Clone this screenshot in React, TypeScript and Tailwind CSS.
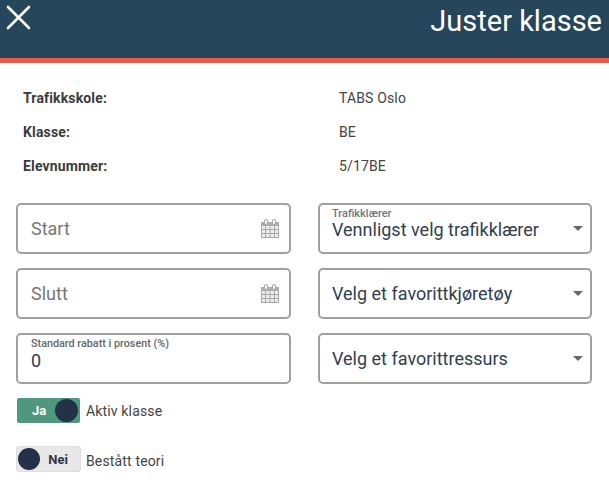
import React from "react";

function CalendarIcon() {
  return (
    <svg width="20" height="20" viewBox="0 0 20 20" className="shrink-0">
      <rect x="1.5" y="3.5" width="17" height="15" fill="#ececec" stroke="#a8a8a8" />
      <rect x="1" y="3" width="18" height="4" fill="#adadad" />
      <rect x="4.5" y="0.5" width="3" height="5" rx="1.5" fill="#fff" stroke="#a3a3a3" />
      <rect x="12.5" y="0.5" width="3" height="5" rx="1.5" fill="#fff" stroke="#a3a3a3" />
      <path d="M1 10.5h18M1 14.5h18M5.5 7v11M10 7v11M14.5 7v11" stroke="#a8a8a8" strokeWidth="1" fill="none" />
    </svg>
  );
}

function Caret() {
  return <div className="absolute right-[7px] top-[21px] w-0 h-0 border-x-[5px] border-x-transparent border-t-[5px] border-t-[#666]" />;
}

function Info({ label, value }: { label: string; value: string }) {
  return (
    <div className="flex h-[34px] items-center tracking-[0.15px]">
      <div className="w-[316px] font-bold text-[14px] text-[#3b3b3b]">{label}</div>
      <div className="text-[14px] text-[#444]">{value}</div>
    </div>
  );
}

function Field({ children, className = "" }: { children: React.ReactNode; className?: string }) {
  return (
    <div className={`relative h-[51px] rounded-[5px] border-[2px] border-[#a0a0a0] bg-white ${className}`}>
      {children}
    </div>
  );
}

function DateField({ label }: { label: string }) {
  return (
    <Field className="flex items-center justify-between pl-[13px] pr-[9px]">
      <span className="text-[18px] text-[#777]">{label}</span>
      <CalendarIcon />
    </Field>
  );
}

function SelectField({ label }: { label: string }) {
  return (
    <Field className="flex items-center pl-[12px]">
      <span className="text-[18px] text-[#30404f]">{label}</span>
      <Caret />
    </Field>
  );
}

export default function App() {
  return (
    <div className="w-[609px] h-[480px] overflow-hidden bg-white font-['Roboto',sans-serif]">
      <header className="flex h-[58px] items-start justify-between bg-[#26465c] pl-[6px] pr-[7px]">
        <svg width="25" height="25" viewBox="0 0 25 25" className="mt-[5px]">
          <path d="M2 2L23 23M23 2L2 23" stroke="#fff" strokeWidth="2.6" strokeLinecap="round" />
        </svg>
        <h1 className="mt-[3px] text-[29px] leading-[36px] font-normal text-white">Juster klasse</h1>
      </header>
      <div className="h-[5px] bg-[#eb5a48]" />

      <section className="mt-[18px] pl-[23px]">
        <Info label="Trafikkskole:" value="TABS Oslo" />
        <Info label="Klasse:" value="BE" />
        <Info label="Elevnummer:" value="5/17BE" />
      </section>

      <section className="mt-[20px] ml-[16px] grid w-[576px] grid-cols-[275px_274px] gap-x-[27px] gap-y-[14px]">
        <DateField label="Start" />
        <Field className="pl-[12px] pt-[3px]">
          <div className="text-[11px] leading-[11px] font-medium text-[#777]">Trafikklærer</div>
          <div className="text-[18px] leading-[22px] text-[#30404f]">Vennligst velg trafikklærer</div>
          <Caret />
        </Field>
        <DateField label="Slutt" />
        <SelectField label="Velg et favorittkjøretøy" />
        <Field className="pl-[13px] pt-[3px]">
          <div className="text-[10.8px] leading-[11px] font-medium text-[#666]">Standard rabatt i prosent (%)</div>
          <div className="text-[18px] leading-[24px] text-[#30404f]">0</div>
        </Field>
        <SelectField label="Velg et favorittressurs" />
      </section>

      <section className="mt-[14px] ml-[17px]">
        <div className="flex h-[26px] items-start">
          <div className="flex h-[25px] w-[63px] items-center justify-between rounded-[2px] bg-[#4f977d] pl-[15px] pr-[2px]">
            <span className="pt-[1px] text-[13px] font-bold text-white">Ja</span>
            <span className="h-[23px] w-[23px] rounded-full bg-[#233246]" />
          </div>
          <span className="ml-[6px] mt-[3px] text-[14px] tracking-[0.15px] text-[#444]">Aktiv klasse</span>
        </div>
        <div className="-ml-[1px] mt-[22px] flex h-[26px] items-start">
          <div className="flex h-[26px] w-[65px] items-center justify-between rounded-[3px] border border-[#ddd] bg-[#e8e8e8] pl-[1px] pr-[12px]">
            <span className="h-[22px] w-[22px] rounded-full bg-[#233246]" />
            <span className="pt-[1px] text-[13px] font-bold text-[#30364a]">Nei</span>
          </div>
          <span className="ml-[5px] mt-[5px] text-[14px] tracking-[0.15px] text-[#444]">Bestått teori</span>
        </div>
      </section>
    </div>
  );
}
